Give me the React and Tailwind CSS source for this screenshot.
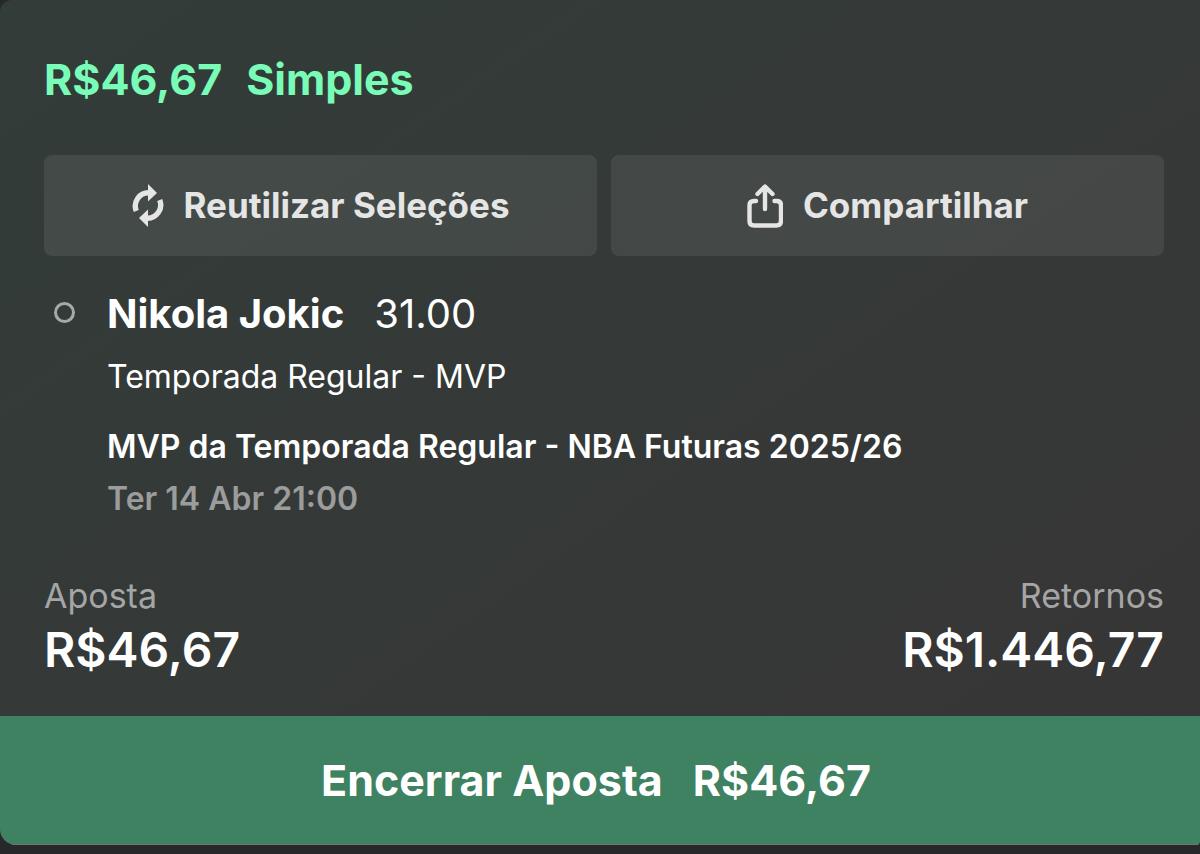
export default function App() {
  return (
    <main className="min-h-screen bg-[#27282a] font-['Inter',sans-serif] text-white">
      <article className="flex flex-col overflow-hidden rounded-tl-xl rounded-br-sm rounded-bl-2xl bg-linear-to-br from-[#323c39] via-[#353938] to-[#373535]">
        <div className="pt-[55px] pr-9 pb-9 pl-11">
          <h1 className="flex gap-6 text-[43px] leading-12 font-bold text-[#78fcb8]">
            <span>R$46,67</span>
            <span>Simples</span>
          </h1>
          <div className="mt-[52px] grid grid-cols-2 gap-[14px] text-[35px] font-bold text-[#e4e5e4]">
            <button type="button" className="flex h-[101px] items-center justify-center gap-5 rounded-lg bg-white/8">
              <svg viewBox="0 0 32 44" className="h-11 w-8" fill="none" stroke="currentColor" strokeWidth="5.4" aria-hidden="true">
                <path d="M4.3 27A13.2 13.2 0 0 1 17 8.8" />
                <path d="M16 0L25 9L16 17.5Z" fill="currentColor" stroke="none" />
                <path d="M27.7 16A13.2 13.2 0 0 1 15 34.2" />
                <path d="M16 43L7 34L16 25.5Z" fill="currentColor" stroke="none" />
              </svg>
              Reutilizar Seleções
            </button>
            <button type="button" className="flex h-[101px] items-center justify-center gap-5 rounded-lg bg-white/8">
              <svg viewBox="0 0 36 44" className="h-11 w-9" fill="none" stroke="currentColor" strokeWidth="4.4" strokeLinecap="round" strokeLinejoin="round" aria-hidden="true">
                <path d="M9 17H7Q2.5 17 2.5 21V37Q2.5 41.5 7 41.5H29.5Q34 41.5 34 37V21Q34 17 29.5 17H27.5M18 25V3M10.5 10L18 2.5L25.5 10" />
              </svg>
              Compartilhar
            </button>
          </div>
          <section className="mt-8 flex">
            <span className="mt-[14px] ml-[10px] size-[21px] shrink-0 rounded-full border-3 border-[#a5a9a7]" />
            <div className="ml-8">
              <h2 className="flex gap-[30px] text-[40px] leading-[52px] font-bold">
                <span>Nikola Jokic</span>
                <span className="font-normal">31.00</span>
              </h2>
              <p className="mt-[17px] text-[32px] leading-10">Temporada Regular - MVP</p>
              <p className="mt-[30px] text-[32px] leading-10 font-semibold">MVP da Temporada Regular - NBA Futuras 2025/26</p>
              <p className="mt-3 text-[32px] leading-10 font-semibold text-[#9b9c9b]">Ter 14 Abr 21:00</p>
            </div>
          </section>
          <dl className="mt-[53px] flex justify-between">
            <div>
              <dt className="text-[34px] leading-12 text-[#a5a5a5]">Aposta</dt>
              <dd className="text-[48px] leading-[60px] font-semibold">R$46,67</dd>
            </div>
            <div className="text-right">
              <dt className="text-[34px] leading-12 text-[#a5a5a5]">Retornos</dt>
              <dd className="text-[48px] leading-[60px] font-semibold">R$1.446,77</dd>
            </div>
          </dl>
        </div>
        <button type="button" className="flex h-[129px] items-center justify-center gap-[30px] border-b border-[#72766f] bg-[#3e8261] pr-2 text-[43px] font-bold">
          <span>Encerrar Aposta</span>
          <span>R$46,67</span>
        </button>
      </article>
    </main>
  );
}
